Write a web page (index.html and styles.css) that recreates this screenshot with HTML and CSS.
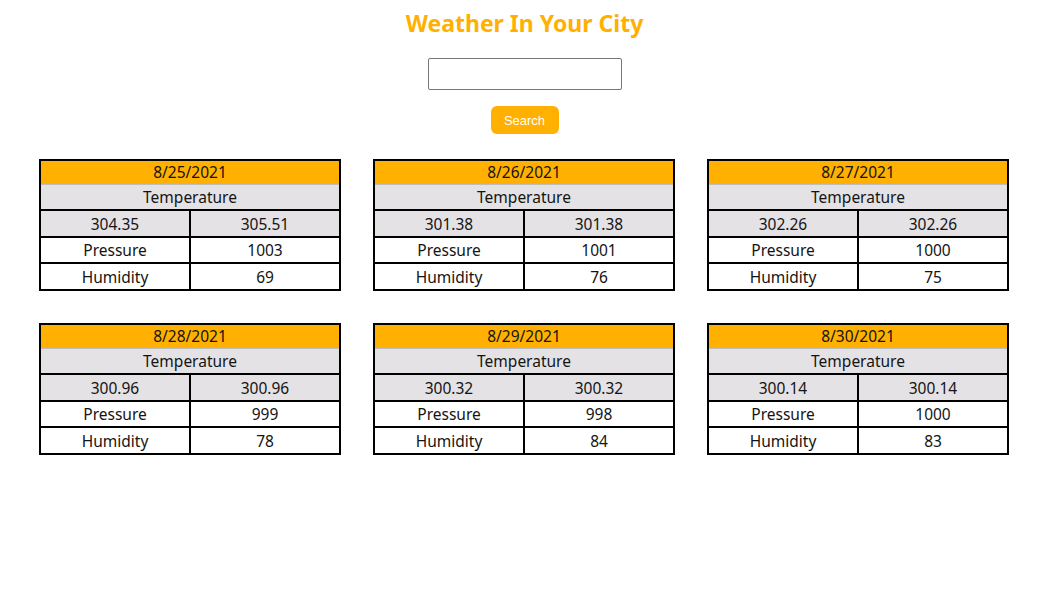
FILE: index.html
```html
<!DOCTYPE html>
<html lang="en">
<head>
<meta charset="utf-8">
<title>Weather In Your City</title>
<link rel="stylesheet" href="styles.css">
</head>
<body>
<header class="top">
  <h1 class="title">Weather In Your City</h1>
  <input class="city-input" type="text">
  <button class="search-btn">Search</button>
</header>
<main class="grid">
  <table class="day">
    <tr><th colspan="2" class="date">8/25/2021</th></tr>
    <tr><th colspan="2" class="sub">Temperature</th></tr>
    <tr class="temps"><td>304.35</td><td>305.51</td></tr>
    <tr><td>Pressure</td><td>1003</td></tr>
    <tr class="last"><td>Humidity</td><td>69</td></tr>
  </table>
  <table class="day">
    <tr><th colspan="2" class="date">8/26/2021</th></tr>
    <tr><th colspan="2" class="sub">Temperature</th></tr>
    <tr class="temps"><td>301.38</td><td>301.38</td></tr>
    <tr><td>Pressure</td><td>1001</td></tr>
    <tr class="last"><td>Humidity</td><td>76</td></tr>
  </table>
  <table class="day">
    <tr><th colspan="2" class="date">8/27/2021</th></tr>
    <tr><th colspan="2" class="sub">Temperature</th></tr>
    <tr class="temps"><td>302.26</td><td>302.26</td></tr>
    <tr><td>Pressure</td><td>1000</td></tr>
    <tr class="last"><td>Humidity</td><td>75</td></tr>
  </table>
  <table class="day">
    <tr><th colspan="2" class="date">8/28/2021</th></tr>
    <tr><th colspan="2" class="sub">Temperature</th></tr>
    <tr class="temps"><td>300.96</td><td>300.96</td></tr>
    <tr><td>Pressure</td><td>999</td></tr>
    <tr class="last"><td>Humidity</td><td>78</td></tr>
  </table>
  <table class="day">
    <tr><th colspan="2" class="date">8/29/2021</th></tr>
    <tr><th colspan="2" class="sub">Temperature</th></tr>
    <tr class="temps"><td>300.32</td><td>300.32</td></tr>
    <tr><td>Pressure</td><td>998</td></tr>
    <tr class="last"><td>Humidity</td><td>84</td></tr>
  </table>
  <table class="day">
    <tr><th colspan="2" class="date">8/30/2021</th></tr>
    <tr><th colspan="2" class="sub">Temperature</th></tr>
    <tr class="temps"><td>300.14</td><td>300.14</td></tr>
    <tr><td>Pressure</td><td>1000</td></tr>
    <tr class="last"><td>Humidity</td><td>83</td></tr>
  </table>
</main>
</body>
</html>
```

FILE: styles.css
```css
body {
  margin: 8px;
  font-family: "Noto Sans", "Open Sans", sans-serif;
  color: #141414;
  background: #fff;
}
.top {
  display: flex;
  flex-direction: column;
  align-items: center;
}
.title {
  margin: 0;
  font-size: 23px;
  line-height: 31px;
  font-weight: 700;
  color: #ffb000;
}
.city-input {
  margin-top: 19px;
  width: 194px;
  height: 32px;
  box-sizing: border-box;
  border: 1px solid #767676;
  border-radius: 2px;
  padding: 0 4px;
  font-size: 14px;
}
.search-btn {
  margin-top: 16px;
  width: 68px;
  height: 28px;
  border: none;
  border-radius: 6px;
  background: #ffb000;
  color: #fff;
  font-family: "Liberation Sans", Arial, sans-serif;
  font-size: 13px;
  padding: 0;
}
.grid {
  margin-top: 25px;
  padding-right: 1px;
  display: grid;
  grid-template-columns: repeat(3, 302px);
  column-gap: 32px;
  row-gap: 32px;
  justify-content: center;
}
.day {
  width: 302px;
  border-collapse: collapse;
  border: 2px solid #000;
  font-size: 15.5px;
  text-align: center;
  table-layout: fixed;
}
.day th, .day td {
  padding: 0;
  height: 24px;
  line-height: 24px;
  font-weight: 400;
}
.day td {
  border: 2px solid #000;
}
.day .date {
  height: 23px;
  line-height: 23px;
  background: #ffb000;
  border-bottom: 1px solid #bdbdbd;
}
.sub {
  background: #e4e2e4;
}
.temps td {
  height: 25px;
  background: #e4e2e4;
}
.last td {
  height: 25px;
}
```
